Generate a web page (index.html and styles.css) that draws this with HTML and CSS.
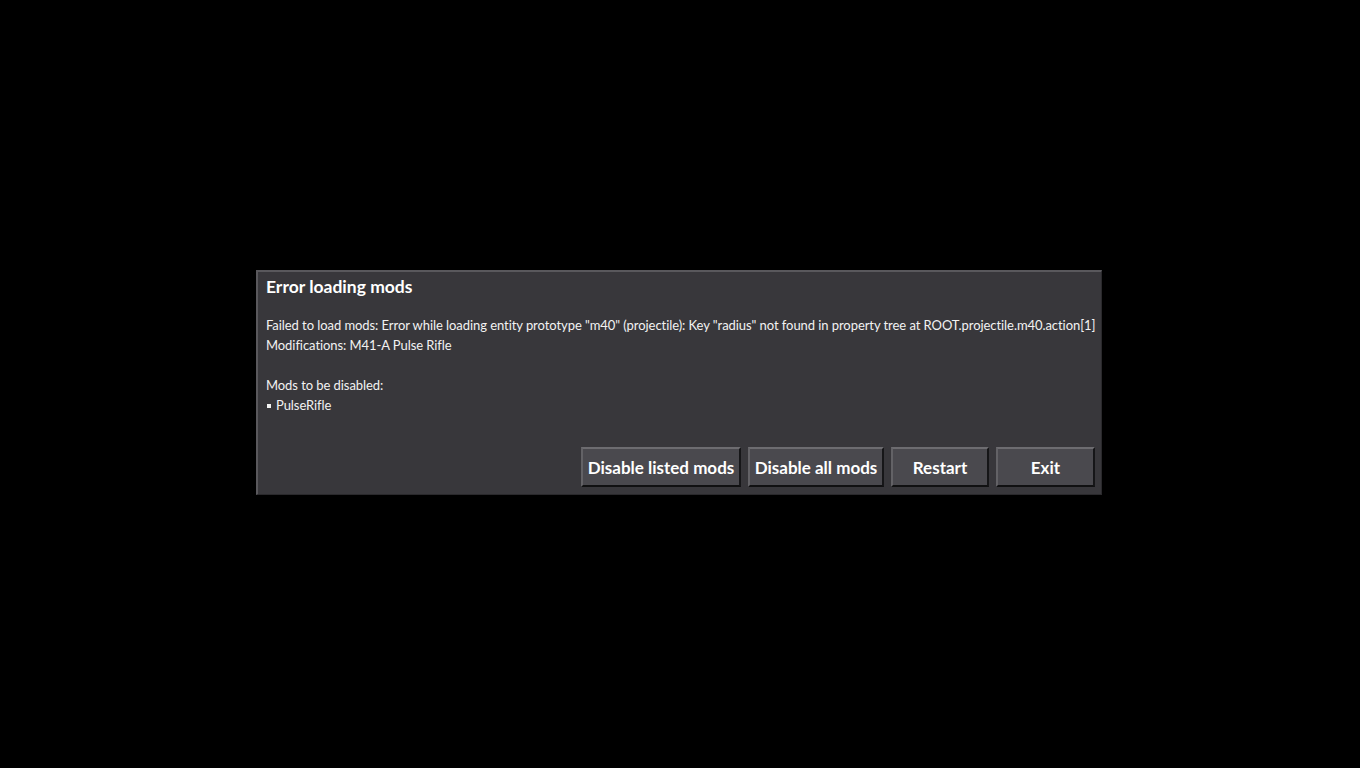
FILE: index.html
```html
<!DOCTYPE html>
<html>
<head>
<meta charset="utf-8">
<link rel="stylesheet" href="styles.css">
</head>
<body>
<div class="screen">
  <div class="dialog">
    <div class="title">Error loading mods</div>
    <div class="body">
      <div class="line">Failed to load mods: Error while loading entity prototype "m40" (projectile): Key "radius" not found in property tree at ROOT.projectile.m40.action[1]</div>
      <div class="line">Modifications: M41-A Pulse Rifle</div>
      <div class="line blank"></div>
      <div class="line">Mods to be disabled:</div>
      <div class="line"><span class="bullet"></span>PulseRifle</div>
    </div>
    <div class="buttons">
      <button class="btn w1">Disable listed mods</button>
      <button class="btn w2">Disable all mods</button>
      <button class="btn w3">Restart</button>
      <button class="btn w4">Exit</button>
    </div>
  </div>
</div>
</body>
</html>
```
FILE: styles.css
```css
html, body {
  margin: 0;
  padding: 0;
  background: #000;
}
.screen {
  width: 1360px;
  height: 768px;
  padding: 270px 0 0 256px;
  box-sizing: border-box;
}
.dialog {
  width: 846px;
  height: 225px;
  box-sizing: border-box;
  background: #38373b;
  border-top: 2px solid #59585c;
  border-left: 2px solid #59585c;
  border-right: 1px solid #2a292c;
  border-bottom: 1px solid #2a292c;
  padding: 5px 6px 7px 8px;
  display: flex;
  flex-direction: column;
  font-family: "Lato", "Liberation Sans", sans-serif;
  color: #ffffff;
}
.title {
  font-weight: 700;
  font-size: 17.5px;
  line-height: 20px;
  height: 20px;
}
.body {
  margin-top: 18px;
  font-size: 13px;
  line-height: 20px;
  letter-spacing: -0.065px;
  color: #f2f2f2;
}
.line {
  height: 20px;
  white-space: nowrap;
}
.bullet {
  display: inline-block;
  width: 4px;
  height: 4px;
  background: #f2f2f2;
  margin: 0 5px 2px 1px;
  vertical-align: middle;
}
.buttons {
  margin-top: auto;
  display: flex;
  justify-content: flex-end;
  gap: 7px;
}
.btn {
  height: 40px;
  box-sizing: border-box;
  background: #4a494e;
  color: #ffffff;
  font-family: "Lato", "Liberation Sans", sans-serif;
  font-weight: 700;
  font-size: 17px;
  border-top: 2px solid #6d6c70;
  border-left: 2px solid #636266;
  border-right: 2px solid #161618;
  border-bottom: 2px solid #111112;
  padding: 0;
  text-align: center;
}
.w1 { width: 160px; }
.w2 { width: 136px; }
.w3 { width: 98px; }
.w4 { width: 99px; }
```
